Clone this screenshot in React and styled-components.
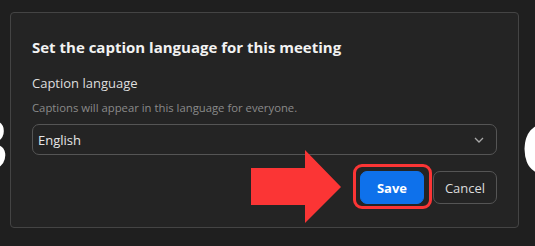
import styled, { createGlobalStyle } from "styled-components";

const GlobalStyle = createGlobalStyle`
  html, body {
    margin: 0;
    padding: 0;
    background: #1f1f1f;
  }
  body {
    font-family: "Open Sans", "Noto Sans", sans-serif;
  }
`;

const Page = styled.div`
  position: relative;
  width: 535px;
  height: 246px;
  overflow: hidden;
  background: #1f1f1f;
`;

const Backdrop = styled.div`
  height: 100%;
  display: flex;
  justify-content: space-between;
  align-items: flex-start;
`;

const BigGlyph = styled.span`
  font-family: "Open Sans", sans-serif;
  font-weight: 700;
  font-size: 70px;
  line-height: 1;
  color: #ffffff;
  margin: ${(p) => (p.$side === "left" ? "108px 0 0 -32px" : "112px -30px 0 0")};
`;

const Dialog = styled.div`
  position: absolute;
  left: 10px;
  top: 12px;
  width: 509px;
  height: 216px;
  box-sizing: border-box;
  background: #242424;
  border: 1px solid #444444;
  border-radius: 4px;
  padding: 24px 21px 0 21px;
  display: flex;
  flex-direction: column;
`;

const Title = styled.h2`
  margin: 0;
  font-size: 15px;
  line-height: 20px;
  font-weight: 700;
  color: #f2f2f2;
`;

const Label = styled.div`
  margin-top: 17px;
  font-size: 13px;
  line-height: 19px;
  color: #dedede;
`;

const Hint = styled.div`
  margin-top: 7px;
  font-size: 11.3px;
  line-height: 16px;
  color: #8a8a8a;
`;

const Select = styled.div`
  margin-top: 8px;
  height: 31px;
  box-sizing: border-box;
  border: 1px solid #555555;
  border-radius: 7px;
  display: flex;
  align-items: center;
  justify-content: space-between;
  padding: 0 12px 0 5px;
  font-size: 13px;
  color: #e6e6e6;
`;

const Actions = styled.div`
  margin-top: 16px;
  display: flex;
  justify-content: flex-end;
  gap: 9px;
`;

const Button = styled.button`
  position: relative;
  width: 64px;
  height: 33px;
  box-sizing: border-box;
  border-radius: 7px;
  font-family: inherit;
  font-size: 13px;
  cursor: pointer;
  border: 1px solid ${(p) => (p.$primary ? "#0e71eb" : "#555555")};
  background: ${(p) => (p.$primary ? "#0e71eb" : "transparent")};
  color: ${(p) => (p.$primary ? "#ffffff" : "#dcdcdc")};
  font-weight: ${(p) => (p.$primary ? 700 : 400)};

  ${(p) =>
    p.$highlight &&
    `
    &::after {
      content: "";
      position: absolute;
      inset: -8px -9px -6px -8px;
      border: 3px solid #fb3535;
      border-radius: 9px;
      pointer-events: none;
    }
  `}
`;

const Arrow = styled.svg`
  position: absolute;
  left: 251px;
  top: 150px;
`;

function App() {
  return (
    <>
      <GlobalStyle />
      <Page>
        <Backdrop>
          <BigGlyph $side="left">3</BigGlyph>
          <BigGlyph $side="right">C</BigGlyph>
        </Backdrop>

        <Dialog>
          <Title>Set the caption language for this meeting</Title>
          <Label>Caption language</Label>
          <Hint>Captions will appear in this language for everyone.</Hint>
          <Select>
            <span>English</span>
            <svg width="10" height="6" viewBox="0 0 10 6">
              <polyline
                points="1,1 5,5 9,1"
                fill="none"
                stroke="#a8a8a8"
                strokeWidth="1.3"
              />
            </svg>
          </Select>
          <Actions>
            <Button $primary $highlight>
              Save
            </Button>
            <Button>Cancel</Button>
          </Actions>
        </Dialog>

        <Arrow width="91" height="74" viewBox="0 0 91 74">
          <polygon
            points="0,18 54,18 54,0 90,37 54,73 54,55 0,55"
            fill="#fb3535"
          />
        </Arrow>
      </Page>
    </>
  );
}

export default App;
